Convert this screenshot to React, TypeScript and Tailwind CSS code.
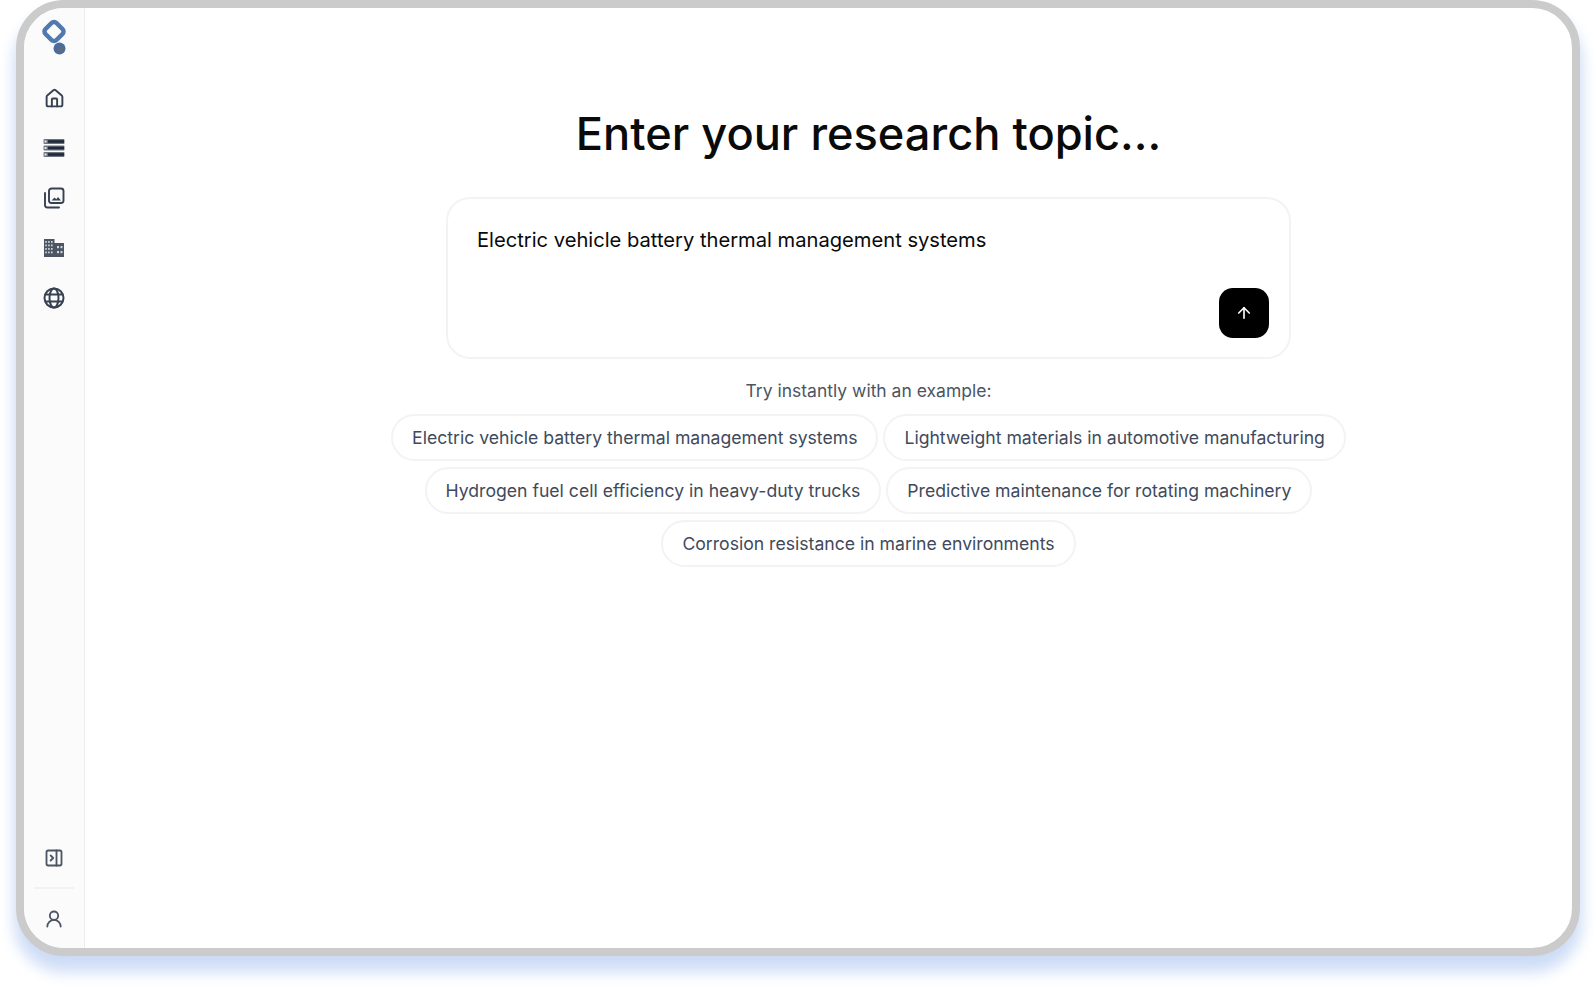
import React from "react";
import { House, PanelRightClose, UserRound, ArrowUp } from "lucide-react";

const Examples = [
  "Electric vehicle battery thermal management systems",
  "Lightweight materials in automotive manufacturing",
  "Hydrogen fuel cell efficiency in heavy-duty trucks",
  "Predictive maintenance for rotating machinery",
  "Corrosion resistance in marine environments",
];

function Logo() {
  return (
    <svg width="26" height="38" viewBox="0 0 26 38" fill="none">
      <rect x="5.250" y="5.750" width="15.500" height="15.500" rx="3.500" transform="rotate(45 13 13.500)" stroke="#5279ae" strokeWidth="4.500" />
      <circle cx="18.500" cy="30.500" r="6" fill="#4a6d9f" />
      <circle cx="19" cy="31" r="2.800" fill="#5f6b7e" />
    </svg>
  );
}

function ListIcon() {
  return (
    <svg width="22" height="20" viewBox="0 0 22 20">
      {[1, 7.500, 14].map((y) => (
        <g key={y}>
          <rect x="0.500" y={y} width="21" height="5" rx="1" fill="#6b7280" />
          <rect x="5" y={y + 1.200} width="16" height="2.600" fill="#1f2937" />
          <rect x="1.500" y={y + 1.500} width="2" height="2" fill="#e5e7eb" />
        </g>
      ))}
    </svg>
  );
}

function PhotosIcon() {
  return (
    <svg width="22" height="22" viewBox="0 0 22 22" fill="none" stroke="#374151" strokeWidth="1.900">
      <rect x="6" y="1.500" width="14.500" height="14.500" rx="2.500" />
      <path d="M2 6v12a2.500 2.500 0 0 0 2.500 2.500H16" strokeLinecap="round" />
      <path d="M8.500 13.500l3-3 1.800 1.800 1.700-2.300 3 3.500z" fill="#374151" stroke="none" />
    </svg>
  );
}

function BuildingIcon() {
  const left = [2.200, 5.100, 8];
  const rows = [3, 6.500, 10, 13.500];
  return (
    <svg width="22" height="20" viewBox="0 0 22 20">
      <path d="M1 1h10.500v4H21v14H1z" fill="#4b5563" />
      <g fill="#d1d5db">
        {left.flatMap((x) => rows.map((y) => <rect key={`${x}-${y}`} x={x} y={y} width="1.600" height="1.800" />))}
        <rect x="14" y="8" width="2" height="2.200" />
        <rect x="17.500" y="8" width="2" height="2.200" />
        <rect x="14" y="13" width="2" height="2.200" />
        <rect x="17.500" y="13" width="2" height="2.200" />
      </g>
    </svg>
  );
}

function GlobeIcon() {
  return (
    <svg width="22" height="22" viewBox="0 0 22 22" fill="none" stroke="#374151" strokeWidth="2">
      <circle cx="11" cy="11" r="9.500" />
      <ellipse cx="11" cy="11" rx="4.500" ry="9.500" />
      <path d="M2.200 7.500h17.600M2.200 14.500h17.600" />
    </svg>
  );
}

export default function App() {
  return (
    <div className="h-[988px] w-full overflow-hidden bg-white font-['Inter',sans-serif]">
      <div className="ml-[16px] h-[956px] w-[1564px] rounded-[48px] border-8 border-[#cbcbcb] bg-white shadow-[0_14px_15px_2px_#cddcf6]">
        <div className="flex h-full overflow-hidden rounded-[40px]">
          <aside className="flex w-[61px] shrink-0 flex-col items-center border-r border-[#ececec] bg-[#fbfbfb]">
            <div className="mt-[10px]"><Logo /></div>
            <div className="mt-[31px] flex flex-col items-center gap-[28px] text-[#374151]">
              <div className="flex h-[22px] items-center"><House size={21} strokeWidth={2.2} /></div>
              <div className="flex h-[22px] items-center"><ListIcon /></div>
              <div className="flex h-[22px] items-center"><PhotosIcon /></div>
              <div className="flex h-[22px] items-center"><BuildingIcon /></div>
              <div className="flex h-[22px] items-center"><GlobeIcon /></div>
            </div>
            <div className="mt-auto flex flex-col items-center text-[#4b5563]">
              <PanelRightClose size={20} strokeWidth={2.200} />
              <div className="mt-[19px] h-[2px] w-[40px] bg-[#f2f2f2]" />
              <UserRound size={20} strokeWidth={2.200} className="mt-[20px]" />
              <div className="h-[19px]" />
            </div>
          </aside>
          <main className="flex flex-1 flex-col items-center pl-[80px] pt-[97.500px]">
            <h1 className="text-[45.2px] leading-[56px] font-medium text-[#0a0a0a]">Enter your research topic...</h1>
            <div className="relative mt-[35.500px] h-[162px] w-[845px] rounded-[24px] border-2 border-[#f3f3f3] bg-white px-[29px] pt-[27px]">
              <p className="text-[20.15px] leading-[28px] text-[#0a0a0a]">Electric vehicle battery thermal management systems</p>
              <button className="absolute right-[20px] bottom-[19px] flex h-[50px] w-[50px] items-center justify-center rounded-[14px] bg-black text-white">
                <ArrowUp size={18} strokeWidth={2.200} />
              </button>
            </div>
            <p className="mt-[20px] text-[17.5px] leading-[24px] text-[#4b5563]">Try instantly with an example:</p>
            <div className="mt-[11px] flex w-[970px] flex-wrap justify-center gap-x-[5px] gap-y-[6px]">
              {Examples.map((e) => (
                <span key={e} className="flex h-[47px] items-center rounded-full border-2 border-[#f3f3f3] bg-white px-[19px] pt-[1px] text-[17.62px] text-[#404a5c]">{e}</span>
              ))}
            </div>
          </main>
        </div>
      </div>
    </div>
  );
}
